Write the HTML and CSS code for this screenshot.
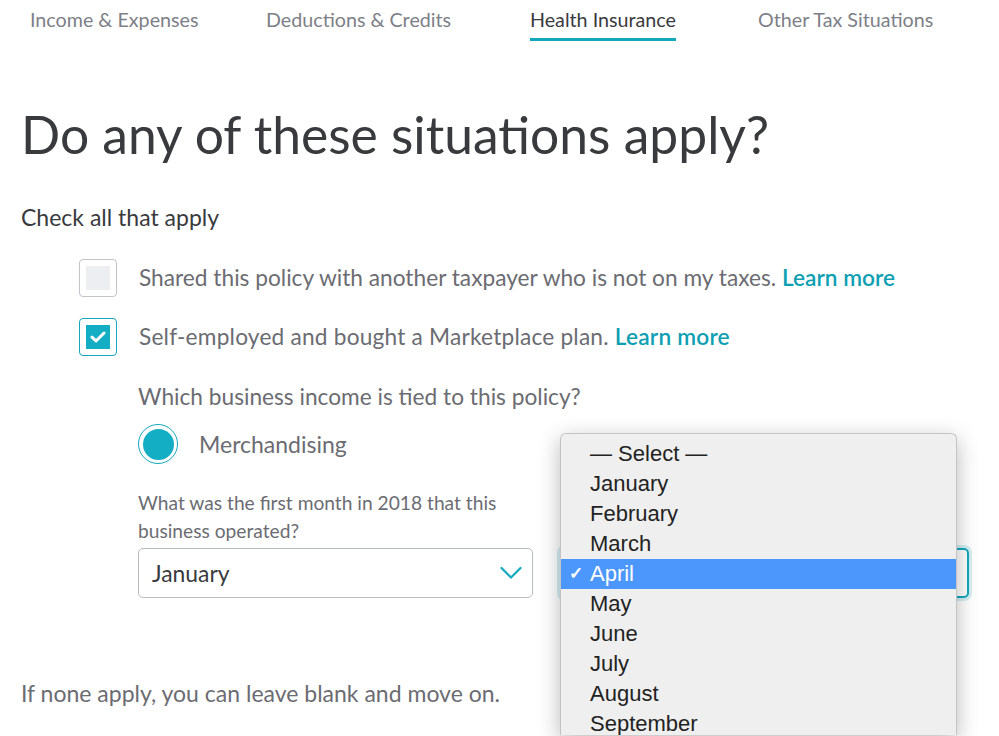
FILE: index.html
```html
<!DOCTYPE html>
<html>
<head>
<meta charset="utf-8">
<link rel="stylesheet" href="styles.css">
</head>
<body>
<nav class="tabs">
  <div class="tab"><span class="tab-label">Income &amp; Expenses</span></div>
  <div class="tab"><span class="tab-label">Deductions &amp; Credits</span></div>
  <div class="tab"><span class="tab-label active">Health Insurance</span></div>
  <div class="tab"><span class="tab-label">Other Tax Situations</span></div>
</nav>
<main class="page">
  <h1 class="title">Do any of these situations apply?</h1>
  <p class="subtitle">Check all that apply</p>
  <div class="options">
    <div class="option">
      <span class="checkbox"><span class="checkbox-fill"></span></span>
      <span class="option-text">Shared this policy with another taxpayer who is not on my taxes. <a class="link">Learn more</a></span>
    </div>
    <div class="option">
      <span class="checkbox checked"><span class="checkbox-fill">
        <svg width="16" height="12" viewBox="0 0 16 12"><path d="M2 6.2 L6 10 L14 2" fill="none" stroke="#fff" stroke-width="3" stroke-linecap="round" stroke-linejoin="round"/></svg>
      </span></span>
      <span class="option-text wide">Self-employed and bought a Marketplace plan. <a class="link">Learn more</a></span>
    </div>
    <div class="sub">
      <p class="question">Which business income is tied to this policy?</p>
      <div class="radio-row">
        <span class="radio"><span class="radio-dot"></span></span>
        <span class="radio-text">Merchandising</span>
      </div>
      <div class="months">
        <div class="field">
          <p class="field-label">What was the first month in 2018 that this business operated?</p>
          <div class="select">
            <span class="select-value">January</span>
            <svg class="chev" width="22" height="14" viewBox="0 0 22 14"><path d="M1.5 2 L11 11.5 L20.5 2" fill="none" stroke="#13a8bd" stroke-width="2.2" stroke-linecap="round"/></svg>
          </div>
        </div>
        <div class="field">
          <p class="field-label"></p>
          <div class="select focused">
            <span class="select-value"></span>
            <svg class="chev" width="22" height="14" viewBox="0 0 22 14"><path d="M1.5 2 L11 11.5 L20.5 2" fill="none" stroke="#13a8bd" stroke-width="2.2" stroke-linecap="round"/></svg>
          </div>
        </div>
        <ul class="menu">
          <li class="menu-item">— Select —</li>
          <li class="menu-item">January</li>
          <li class="menu-item">February</li>
          <li class="menu-item">March</li>
          <li class="menu-item selected"><span class="tick">✓</span>April</li>
          <li class="menu-item">May</li>
          <li class="menu-item">June</li>
          <li class="menu-item">July</li>
          <li class="menu-item">August</li>
          <li class="menu-item">September</li>
        </ul>
      </div>
    </div>
  </div>
  <p class="footnote">If none apply, you can leave blank and move on.</p>
</main>
</body>
</html>
```

FILE: styles.css
```css
html, body {
  margin: 0;
  padding: 0;
  height: 736px;
  overflow: hidden;
  background: #ffffff;
}
body {
  font-family: Lato, "Noto Sans", sans-serif;
  color: #6b6c72;
}
p { margin: 0; }

.tabs {
  display: grid;
  grid-template-columns: 236px 264px 228px auto;
  padding-left: 30px;
}
.tab-label {
  display: inline-block;
  font-size: 19.7px;
  line-height: 24px;
  padding: 8px 0 6px;
  color: #7d8087;
  border-bottom: 3px solid transparent;
}
.tab-label.active {
  color: #393a3d;
  border-bottom-color: #13a8bd;
}

.page {
  padding-left: 21px;
}
.title {
  margin: 61px 0 0;
  font-size: 51.6px;
  line-height: 64px;
  font-weight: 400;
  color: #393a3d;
}
.subtitle {
  margin-top: 36px;
  font-size: 23px;
  line-height: 30px;
  color: #393a3d;
}

.options {
  margin-top: 27px;
  padding-left: 58px;
}
.option {
  display: flex;
  align-items: center;
  gap: 22px;
  margin-bottom: 21px;
}
.checkbox {
  box-sizing: border-box;
  width: 38px;
  height: 38px;
  border: 1px solid #c2c4c8;
  border-radius: 4px;
  padding: 6px;
  display: flex;
  flex: none;
}
.checkbox-fill {
  flex: 1;
  background: #eceef1;
  display: flex;
  align-items: center;
  justify-content: center;
}
.checkbox.checked {
  border-color: #13a8bd;
}
.checkbox.checked .checkbox-fill {
  background: #13aec4;
}
.option-text {
  font-size: 22.7px;
  line-height: 30px;
}
.option-text.wide {
  letter-spacing: 0.2px;
}
.link {
  color: #0f9fb3;
  font-weight: 600;
}

.sub {
  padding-left: 59px;
  margin-top: 26px;
}
.question {
  font-size: 22.7px;
  line-height: 30px;
}
.radio-row {
  display: flex;
  align-items: center;
  gap: 21px;
  margin-top: 12px;
}
.radio {
  box-sizing: border-box;
  width: 40px;
  height: 40px;
  border-radius: 50%;
  border: 1.5px solid #13a8bd;
  padding: 3.5px;
  display: flex;
  flex: none;
}
.radio-dot {
  flex: 1;
  border-radius: 50%;
  background: #13aec4;
}
.radio-text {
  font-size: 23px;
  line-height: 30px;
}

.months {
  position: relative;
  display: grid;
  grid-template-columns: 395px 409px;
  column-gap: 27px;
  margin-top: 25px;
}
.field-label {
  font-size: 19.2px;
  line-height: 28px;
  height: 56px;
  margin-bottom: 3px;
}
.select {
  box-sizing: border-box;
  height: 50px;
  border: 1px solid #b9bcc0;
  border-radius: 5px;
  display: flex;
  align-items: center;
  justify-content: space-between;
  padding: 0 10px 0 13px;
}
.select-value {
  font-size: 22.9px;
  color: #393a3d;
}
.select.focused {
  border: 2px solid #13a8bd;
  box-shadow: 0 0 0 3px rgba(19, 168, 189, 0.18);
}

.menu {
  position: absolute;
  left: 422px;
  top: -56px;
  width: 397px;
  height: 302px;
  overflow: hidden;
  box-sizing: border-box;
  margin: 0;
  padding: 5px 0 0;
  list-style: none;
  background: #efefef;
  border: 1px solid #c4c4c4;
  border-bottom: none;
  border-radius: 6px 6px 0 0;
  box-shadow: 0 6px 22px rgba(0, 0, 0, 0.28);
  font-family: "Liberation Sans", Arial, sans-serif;
}
.menu-item {
  position: relative;
  height: 30px;
  line-height: 30px;
  padding-left: 29px;
  font-size: 22px;
  color: #222222;
}
.menu-item.selected {
  background: #4c97fc;
  color: #ffffff;
}
.tick {
  position: absolute;
  left: 8px;
  font-size: 17px;
  font-weight: 700;
}

.footnote {
  margin-top: 80px;
  font-size: 23px;
  line-height: 30px;
}
```
